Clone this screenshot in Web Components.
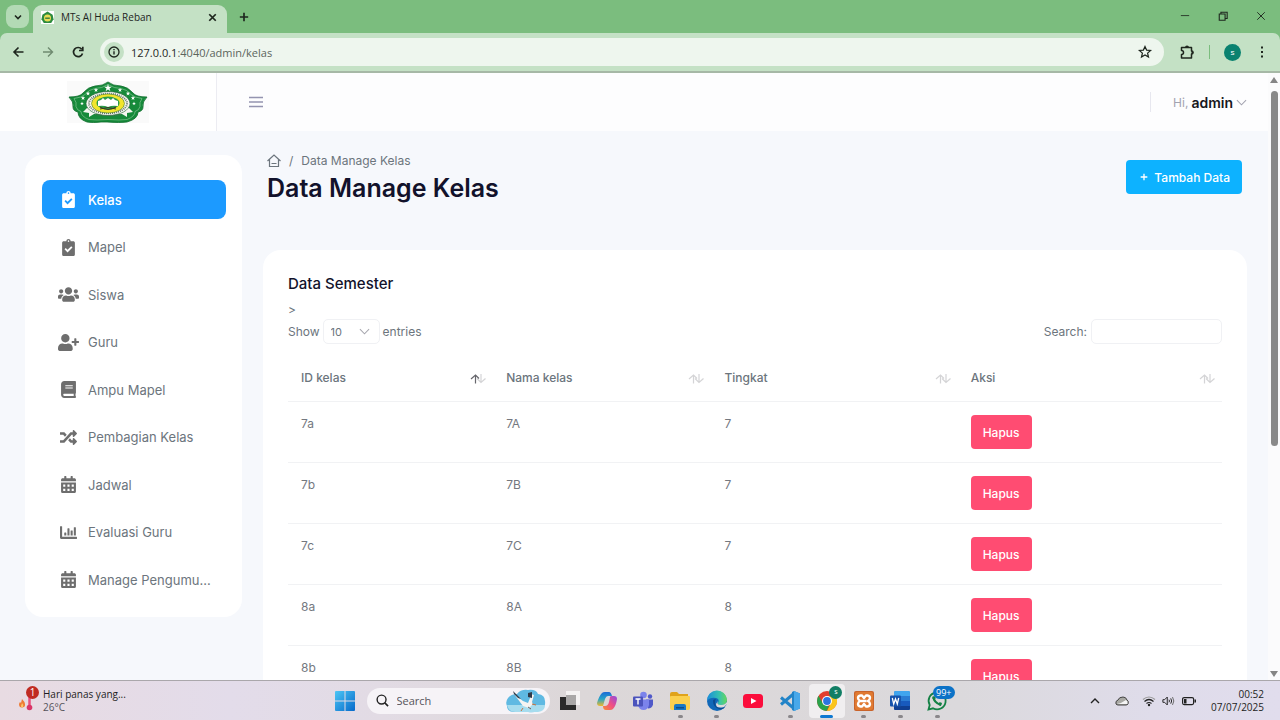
<!DOCTYPE html>
<html lang="id">
<head>
<meta charset="utf-8">
<title>MTs Al Huda Reban</title>
<style>
  html, body { margin: 0; height: 100%; }
  body { font-family: Inter, sans-serif; font-size: 12px; overflow: hidden; background: #f6f8fc; }
</style>
</head>
<body>
<desktop-screen>
  <browser-chrome slot="chrome" tab-title="MTs Al Huda Reban" host="127.0.0.1" path=":4040/admin/kelas"></browser-chrome>
  <site-header slot="page" user="admin"></site-header>
  <side-nav slot="nav">
    <nav-item icon="clipboard" active>Kelas</nav-item>
    <nav-item icon="clipboard">Mapel</nav-item>
    <nav-item icon="users">Siswa</nav-item>
    <nav-item icon="userplus">Guru</nav-item>
    <nav-item icon="book">Ampu Mapel</nav-item>
    <nav-item icon="random">Pembagian Kelas</nav-item>
    <nav-item icon="calendar">Jadwal</nav-item>
    <nav-item icon="chart">Evaluasi Guru</nav-item>
    <nav-item icon="calendar">Manage Pengumu...</nav-item>
  </side-nav>
  <page-heading slot="main">Data Manage Kelas</page-heading>
  <class-card slot="main">Data Semester</class-card>
  <task-bar slot="taskbar"></task-bar>
</desktop-screen>

<script>
const star = (x, y, r) => {
  let p = '';
  for (let i = 0; i < 10; i++) {
    const a = Math.PI * (i / 5 - 0.5), q = i % 2 ? r * 0.4 : r;
    p += (i ? 'L' : 'M') + (x + q * Math.cos(a)).toFixed(1) + ' ' + (y + q * Math.sin(a)).toFixed(1);
  }
  return `<path fill="#fff" d="${p}Z"/>`;
};
const calendarHoles = [256, 384].flatMap(y => [64, 192, 320].map(x => `M${x} ${y}h64v64h-64z`)).join('');

const ICONS = {
  clipboard: ['0 0 384 512', '<path fill="currentColor" fill-rule="evenodd" d="M384 112v352c0 26.5-21.5 48-48 48H48c-26.5 0-48-21.5-48-48V112c0-26.5 21.5-48 48-48h80c0-35.3 28.7-64 64-64s64 28.7 64 64h80c26.5 0 48 21.5 48 48zM192 40c-13.3 0-24 10.7-24 24s10.7 24 24 24 24-10.7 24-24-10.7-24-24-24zM72 312l38-38 53 53 111-111 38 38-149 149z"/>'],
  users: ['0 0 640 512', '<path fill="currentColor" d="M96 224c35.3 0 64-28.7 64-64s-28.7-64-64-64-64 28.7-64 64 28.7 64 64 64zm448 0c35.3 0 64-28.7 64-64s-28.7-64-64-64-64 28.7-64 64 28.7 64 64 64zm32 32h-64c-17.6 0-33.5 7.1-45.1 18.6 40.3 22.1 68.9 62 75.1 109.4h66c17.7 0 32-14.3 32-32v-32c0-35.3-28.7-64-64-64zm-256 0c61.9 0 112-50.1 112-112S381.9 32 320 32 208 82.1 208 144s50.1 112 112 112zm76.8 32h-8.3c-20.8 10-43.9 16-68.5 16s-47.6-6-68.5-16h-8.3C179.6 288 128 339.6 128 403.2V432c0 26.5 21.5 48 48 48h288c26.5 0 48-21.5 48-48v-28.8c0-63.6-51.6-115.2-115.2-115.2zm-223.7-13.4C161.5 263.1 145.6 256 128 256H64c-35.3 0-64 28.7-64 64v32c0 17.7 14.3 32 32 32h65.9c6.3-47.4 34.9-87.3 75.2-109.4z"/>'],
  userplus: ['0 0 640 512', '<path fill="currentColor" d="M624 208h-64v-64c0-8.8-7.2-16-16-16h-32c-8.8 0-16 7.2-16 16v64h-64c-8.8 0-16 7.2-16 16v32c0 8.8 7.2 16 16 16h64v64c0 8.8 7.2 16 16 16h32c8.8 0 16-7.2 16-16v-64h64c8.8 0 16-7.2 16-16v-32c0-8.8-7.2-16-16-16zm-400 48c70.7 0 128-57.3 128-128S294.7 0 224 0 96 57.3 96 128s57.3 128 128 128zm89.6 32h-16.7c-22.2 10.2-46.9 16-72.9 16s-50.6-5.8-72.9-16h-16.7C60.2 288 0 348.2 0 422.4V464c0 26.5 21.5 48 48 48h352c26.5 0 48-21.5 48-48v-41.6c0-74.2-60.2-134.4-134.4-134.4z"/>'],
  book: ['0 0 448 512', '<path fill="currentColor" fill-rule="evenodd" d="M448 360V24c0-13.3-10.7-24-24-24H96C43 0 0 43 0 96v320c0 53 43 96 96 96h328c13.3 0 24-10.7 24-24v-16c0-7.5-3.5-14.3-8.9-18.7-4.2-15.4-4.2-59.3 0-74.7 5.4-4.3 8.9-11.1 8.9-18.6zM128 128h224v32H128zm0 64h224v32H128zm253.4 256H96c-17.7 0-32-14.3-32-32 0-17.6 14.4-32 32-32h285.4c-1.9 17.1-1.9 46.9 0 64z"/>'],
  random: ['0 0 512 512', '<path fill="currentColor" d="M505 359c9.4 9.4 9.4 24.6 0 34l-80 80c-15 15-41 4.5-41-17v-40h-58.8a12 12 0 0 1-8.8-3.8l-70.5-75.6 53.3-57.1L352 336h32v-40c0-21.4 26-32 41-17zM12 176h84l52.8 56.5 53.3-57.1-70.5-75.6A12 12 0 0 0 122.8 96H12c-6.6 0-12 5.4-12 12v56c0 6.6 5.4 12 12 12zm372 0v40c0 21.5 26 32 41 17l80-80c9.4-9.4 9.4-24.6 0-34l-80-80C410 24 384 34.6 384 56v40h-58.8a12 12 0 0 0-8.8 3.8L96 336H12c-6.6 0-12 5.4-12 12v56c0 6.6 5.4 12 12 12h110.8c3.3 0 6.5-1.4 8.8-3.8L352 176z"/>'],
  calendar: ['0 0 448 512', `<path fill="currentColor" fill-rule="evenodd" d="M0 464c0 26.5 21.5 48 48 48h352c26.5 0 48-21.5 48-48V192H0z${calendarHoles}M400 64h-48V16c0-8.8-7.2-16-16-16h-32c-8.8 0-16 7.2-16 16v48H160V16c0-8.8-7.2-16-16-16h-32c-8.8 0-16 7.2-16 16v48H48C21.5 64 0 85.5 0 112v48h448v-48c0-26.5-21.5-48-48-48z"/>`],
  chart: ['0 0 512 512', '<path fill="currentColor" d="M0 76q0-12 12-12h40q12 0 12 12v308h436q12 0 12 12v40q0 12-12 12H32q-32 0-32-32zM128 268q0-12 12-12h38q12 0 12 12v76H128zM224 140q0-12 12-12h38q12 0 12 12v204h-62zM320 204q0-12 12-12h38q12 0 12 12v140h-62zM416 108q0-12 12-12h38q12 0 12 12v236h-62z"/>'],
  down: ['0 0 12 12', '<path fill="none" stroke="currentColor" stroke-width="1.1" d="M1 3.5l5 5 5-5"/>'],
  tabdown: ['0 0 12 12', '<path fill="none" stroke="currentColor" stroke-width="1.6" d="M3 4.5L6 7.5l3-3"/>'],
  plus: ['0 0 12 12', '<path fill="none" stroke="currentColor" stroke-width="2" d="M6 1v10M1 6h10"/>'],
  close: ['0 0 12 12', '<path fill="none" stroke="currentColor" stroke-width="1.6" d="M3 3l6 6M9 3l-6 6"/>'],
  closethin: ['0 0 12 12', '<path fill="none" stroke="currentColor" stroke-width="1.1" d="M1.5 1.5l9 9M10.5 1.5l-9 9"/>'],
  min: ['0 0 12 12', '<path fill="none" stroke="currentColor" d="M1 5.5h10"/>'],
  restore: ['0 0 12 12', '<path fill="none" stroke="currentColor" stroke-width="1.3" d="M1.500 3.500h7V11h-7zM3.500 3.500V1.500H11V9H8.500"/>'],
  back: ['0 0 16 16', '<path fill="none" stroke="currentColor" stroke-width="1.6" d="M13.500 8H4M8.500 3.500L4 8l4.500 4.500"/>'],
  forward: ['0 0 16 16', '<path fill="none" stroke="currentColor" stroke-width="1.4" d="M3 8h9.500M8 3.500L12.500 8 8 12.500"/>'],
  reload: ['0 0 16 16', '<path fill="none" stroke="currentColor" stroke-width="1.7" d="M12.500 9.500A4.600 4.600 0 1 1 11.700 5.200M12.800 2.800v3.700H9"/>'],
  info: ['0 0 16 16', '<circle cx="8" cy="8" r="5" fill="none" stroke="currentColor" stroke-width="1.3"/><path stroke="currentColor" stroke-width="1.4" d="M8 7.300V10.600M8 5v1.300"/>'],
  star: ['0 0 16 16', '<path fill="none" stroke="currentColor" stroke-width="1.2" d="M8 2.500l1.600 3.600 4 .4-3 2.600.9 4L8 11l-3.500 2.100.9-4-3-2.600 4-.4z"/>'],
  puzzle: ['0 0 16 16', '<path fill="none" stroke="currentColor" stroke-width="1.5" stroke-linejoin="round" d="M2.500 3.500h10v3.500a1.500 1.500 0 0 1 0 3v4h-10v-3.500a2 2 0 0 0 0-4z"/><path d="M6 3.500a2 2 0 0 1 4 0zM12.500 6.500a2 2 0 0 1 0 4z" fill="currentColor"/>'],
  dots: ['0 0 16 16', '<path fill="currentColor" d="M7 2.500h2v2H7zM7 7h2v2H7zM7 11.500h2v2H7z"/>'],
  menu: ['0 0 14 12', '<path stroke="currentColor" stroke-width="1.3" d="M0 1.500h14M0 6h14M0 10.500h14"/>'],
  home: ['0 0 14 14', '<path fill="none" stroke="currentColor" stroke-width="1.2" d="M.500 7L7 1l6.500 6M2.500 5.500v7h9v-7M4.500 9.500h5"/>'],
  sort: ['0 0 16 10', '<path fill="none" stroke="currentColor" stroke-width="1.2" style="opacity:var(--up,.28)" d="M5.500 9.500V1M1 5l4.500-4L9 4.500"/><path fill="none" stroke="currentColor" stroke-width="1.2" opacity=".28" d="M11 0v8.500M7 4.500l4 4 4.500-4"/>'],
  triup: ['0 0 8 6', '<path fill="currentColor" d="M4 0l4 6H0z"/>'],
  tridown: ['0 0 8 6', '<path fill="currentColor" d="M0 0h8L4 6z"/>'],
  logo: ['0 0 82 42', `<path fill="#fafafa" d="M0 0h82v42H0z"/><path fill="#168a3a" stroke="#0c6b2a" stroke-width=".8" d="M41 1q5 4 13 4 7 1 12 7 3 4 14 4-5 5-4 10 0 4-5 5 0 7-11 10-7 1-20 0h-6q-8 1-14 0-9-3-9-10-5-1-5-5 1-5-4-10 11 0 14-4 5-6 12-7 8 0 13-4z"/>
    <path fill="none" stroke="#a8d6b1" stroke-width=".5" d="M41 3.5q6 4 13 4 6 1 10 6 3 3 11 4-3 4-2 8-1 4-5 5 0 5-8 8-7 1-19 0-12 1-19 0-8-3-8-8-4-1-5-5 1-4-2-8 8-1 11-4 4-5 10-6 7 0 13-4z"/>
    <path fill="#f4f6f0" d="M16 31l4-4h42l4 4-6 1v4l-5-3H27l-5 3v-4z"/>
    <ellipse cx="41" cy="22.5" rx="22" ry="12" fill="#f4f6f0" stroke="#1a5c2e" stroke-width=".6"/>
    <ellipse cx="41" cy="22.5" rx="19" ry="9.8" fill="none" stroke="#65786a" stroke-width="2" stroke-dasharray="1 1"/>
    <ellipse cx="41" cy="22.5" rx="16.5" ry="9.5" fill="#f2e52c" stroke="#2a6c2a" stroke-width=".5"/>
    <ellipse cx="41" cy="22" rx="11.5" ry="6.5" fill="#2c9c49"/>
    <path fill="#fff" d="M31 20l3-1 2-2 2 2 3-2 3 2 2-2 2 2 3 1v5q-6-1-10 1-4-2-10-1z"/>
    <path fill="none" stroke="#3b3b22" d="M33 28q8-3 16 0M33 26q8 5 16 0"/>
    <path fill="none" stroke="#55705a" stroke-dasharray="1 .8" d="M28 33.5q13 2 26 0"/>
    ${star(41, 7, 4)}${star(29, 9, 2.3)}${star(53, 9, 2.3)}${star(21, 12.5, 2.3)}${star(61, 12.5, 2.3)}${star(16, 17, 2.3)}${star(66, 17, 2.3)}${star(15, 22.5, 2)}${star(67, 22.5, 2)}`],
  favicon: ['0 0 14 14', '<path fill="#fff" d="M0 0h14v14H0z"/><path fill="#2c8b3e" d="M7 .5l5.500 3.500 1 5-2.500 4H3L.5 9l1-5z"/><circle cx="7" cy="7.5" r="3.8" fill="#e6dc54"/><path fill="#347c3a" d="M4.500 7h5v1.500h-5z"/>'],
  weather: ['0 0 26 26', '<path fill="#ee7b34" d="M5 11q3 3 3 5a3 3 0 0 1-6 1q0-2 1-3l1 1z"/><path fill="#fbc56b" d="M5 15q2 2 1 4-2 1-2-1z"/><path stroke="#e8517c" stroke-width="2.500" stroke-linecap="round" d="M12.500 7v12"/><circle cx="12.500" cy="19.500" r="2.800" fill="#d93668"/>'],
  windows: ['0 0 20 20', '<defs><linearGradient id="w" x1="0" y1="0" x2="1" y2="1"><stop stop-color="#4cc6f5"/><stop offset="1" stop-color="#0669ca"/></linearGradient></defs><path fill="url(#w)" d="M1 0h8.500v9.500H0V1q0-1 1-1zM10.500 0H19q1 0 1 1v8.500h-9.500zM0 10.500h9.500V20H1q-1 0-1-1zM10.500 10.500H20V19q0 1-1 1h-8.500z"/>'],
  search: ['0 0 14 14', '<circle cx="6" cy="6" r="4.8" fill="none" stroke="#222" stroke-width="1.5"/><path stroke="#222" stroke-width="1.7" d="M9.500 9.500L13 13"/>'],
  bird: ['0 0 40 24', '<path fill="#5fb9e2" d="M2 9q3-4 9-4 4-5 11-4 8-1 10 4 7 1 7 7 1 7-5 8-2 4-12 3H9q-8 0-8-6-2-4 1-8z"/><path fill="#a6dcee" d="M1 16h38q0 6-7 7H9q-7-1-8-7z"/><path fill="#f6f4f2" d="M8 5l9 7 5 2 2-5 1-4 3 1-2 7 1 2-4 4-6-2z"/><path fill="#303a48" d="M7 2l8 8-3-1-4-4zM22 4l4-1 0 6-4-1z"/><path fill="none" stroke="#c9713c" d="M26 15l4 1M17 19l-2 3"/><path fill="none" stroke="#6e5c58" d="M22 18l3 2"/>'],
  taskview: ['0 0 20 20', '<path fill="#f4f2f2" d="M6 0h14v14H6z"/><path fill="#2a2a2a" d="M0 6h6v8h10v5H0z"/><path fill="#a9a7a7" d="M6 4h10v10H6z"/>'],
  copilot: ['0 0 20 20', '<defs><linearGradient id="a" x2="0" y2="1"><stop stop-color="#1c6ad6"/><stop offset=".5" stop-color="#27a6c8"/><stop offset="1" stop-color="#f0b92b"/></linearGradient><linearGradient id="b" x1="1" x2="0" y2="1"><stop stop-color="#8e4be0"/><stop offset=".5" stop-color="#ef4f86"/><stop offset="1" stop-color="#f98d32"/></linearGradient></defs><path fill="url(#a)" d="M5 2q1-1 3-1h4q2 0 3 4H11q-2 0-3 3l-2 7H3q-3 0-3-3 2-7 5-10z"/><path fill="url(#b)" d="M15 5h2q3 0 3 3-1 7-4 10-1 1-3 1H9q-3 0-3-4h2q3 0 4-4l1-5q0-1 2-1z"/>'],
  teams: ['0 0 20 20', '<circle cx="10.5" cy="4" r="3.3" fill="#7b83eb"/><circle cx="17" cy="5.5" r="2.2" fill="#5059c9"/><path fill="#5059c9" d="M13 8.500h7v5q-1 4-5 4z"/><path fill="#7b83eb" d="M5 8.500h11V14q-1 5-5.500 5T5 14z"/><rect y="5.5" width="10" height="10" rx="1" fill="#4b53bc"/><path stroke="#fff" stroke-width="1.4" d="M2.500 8h5M5 8v5.500"/>'],
  folder: ['0 0 20 20', '<path fill="#e0a31b" d="M0 3q0-2 2-2h5l2 2h9v5H0z"/><path fill="#fbd04e" d="M0 6q0-1 1-1h18q1 0 1 1v11q0 2-2 2H2q-2 0-2-2z"/><path fill="#1979c4" d="M4 15q0-2 2-2h8q2 0 2 2v4H4z"/><path fill="#0d4e8a" d="M6 16h8v1.500H6z"/>'],
  edge: ['0 0 20 20', '<defs><linearGradient id="e" x2="1"><stop stop-color="#1b8ddb"/><stop offset=".6" stop-color="#35c1b0"/><stop offset="1" stop-color="#66d85c"/></linearGradient></defs><circle cx="10" cy="10" r="10" fill="#1268b8"/><path fill="url(#e)" d="M0 10A10 10 0 0 1 20 9q0 5-6 5-4 0-3-2 2-4-2-5-6-1-9 3z"/><path fill="#0d4b91" d="M6 10q0 6 6 8 4 1 6-2-9 3-10-4 0-3 1-4-3 0-3 2z"/><path fill="#dedada" d="M11 10q-2 4 3 4 4 0 6-3l0 2-3 3q-8 2-8-3z"/>'],
  youtube: ['0 0 20 20', '<rect y="3" width="20" height="14" rx="3.5" fill="#fb0d3c"/><path fill="#fff" d="M8 7l5.500 3L8 13z"/>'],
  vscode: ['0 0 20 20', '<path fill="#2284c8" d="M14 0l6 2.500v15L14 20l-2-1V1z"/><path fill="none" stroke="#2284c8" stroke-width="3" d="M1 6.500L14 17.500M1 13.500L14 2.500"/><path fill="#47a8ea" d="M14 0l6 2.500v15L14 20z"/>'],
  chrome: ['0 0 20 20', '<circle cx="10" cy="10" r="10" fill="#e33e2f"/><path fill="#fac51c" d="M10 5.500h9A10 10 0 0 1 10 20l4-8z"/><path fill="#2ba24c" d="M1.500 4.800L6 12.500l4 2.500 2 0-2.500 5A10 10 0 0 1 1.500 4.800z"/><circle cx="10" cy="10" r="5" fill="#fff"/><circle cx="10" cy="10" r="3.9" fill="#2d75e0"/>'],
  xampp: ['0 0 20 20', '<rect width="20" height="20" rx="2" fill="#c9632a"/><rect x="1" y="1" width="18" height="18" rx="2" fill="#e07a32"/><path fill="none" stroke="#fff" stroke-width="2.4" stroke-linejoin="round" d="M7.500 10H6.200Q4 9 4 7t2.500-2.500H8L10 7l2-2.500h1.500Q16 5 16 7t-2.200 3Q16 11 16 13t-2.500 2.500H12L10 13l-2 2.500H6.500Q4 15 4 13t2.200-3M7.500 10h5"/>'],
  word: ['0 0 20 20', '<rect x="4" width="16" height="19" rx="1.5" fill="#2b7cd3"/><path fill="#41a5ee" d="M4 5V1.500Q4 0 5.500 0h13Q20 0 20 1.500V5z"/><path fill="#185abd" d="M4 10h16v5H4z"/><path fill="#103f91" d="M4 15h16v2.500q0 1.500-1.500 1.500h-13Q4 19 4 17.500z"/><rect y="4.5" width="11" height="11" rx="1" fill="#1753ac"/><path fill="none" stroke="#fff" stroke-width="1.3" d="M2.300 7l1.400 6L5.500 8l1.800 5 1.400-6"/>'],
  whatsapp: ['0 0 20 20', '<path fill="none" stroke="#148145" stroke-width="1.8" d="M1.500 18.500l1.200-4.500A8.500 8.500 0 1 1 6 17.300z"/><path fill="none" stroke="#148145" stroke-width="2.2" d="M6.500 5.500q0 6 7.500 8.500"/><path stroke="#148145" stroke-width="3" d="M6 6l2 2M12 12.500l2.500 1"/>'],
  trayup: ['0 0 12 12', '<path fill="none" stroke="#222" stroke-width="1.4" d="M2 8l4-4 4 4"/>'],
  cloud: ['0 0 14 12', '<path fill="#a9a9a4" stroke="#444" d="M1 9q-1-3 2-4 1-3 5-3 3 0 4 3 2 1 1 4-1 1-2 1H3q-1 0-2-1z"/><path fill="#f5f5f5" d="M2 9q5-1 9-4 2 1 1.500 4H3z"/>'],
  wifi: ['0 0 14 12', '<g fill="none" stroke="#222" stroke-width="1.2"><path stroke="#999" d="M1 4.500q6-5 12 0"/><path d="M2.500 6.500q4.500-4 9 0M4.500 8.500q2.500-2 5 0"/></g><circle cx="7" cy="10" r="1.2" fill="#222"/>'],
  volume: ['0 0 16 12', '<g fill="none" stroke="#222" stroke-width="1.1"><path d="M1 4.500h2l3-3v9l-3-3H1zM8 4.500q1 1.500 0 3M10 3q2 3 0 6"/><path stroke="#666" d="M12 1.500q3 4.500 0 9"/></g>'],
  battery: ['0 0 14 10', '<rect x=".6" y="1.6" width="11" height="7" rx="1.5" fill="none" stroke="#222" stroke-width="1.2"/><path fill="#222" d="M2 3h2.500v4.500H2zM12.500 3.500H14v3h-1.500z"/>']
};

const define = (name, markup, setup) => customElements.define(name, class extends HTMLElement {
  constructor() {
    super();
    this.attachShadow({ mode: 'open' });
  }
  connectedCallback() {
    const template = document.createElement('template');
    template.innerHTML = typeof markup === 'function' ? markup(this) : markup;
    this.shadowRoot.replaceChildren(template.content.cloneNode(true));
    if (setup) setup(this);
  }
});

define('ui-icon', el => {
  const [box, body] = ICONS[el.getAttribute('name')];
  return `<style>:host{display:inline-block;flex:none;width:16px;height:16px}svg{display:block;width:100%;height:100%;overflow:visible}</style>
  <svg viewBox="${box}" aria-hidden="true">${body}</svg>`;
});

define('desktop-screen', `<style>
  :host{display:flex;flex-direction:column;height:100vh;overflow:hidden}
  .view{flex:1;min-height:0;display:flex;background:#f6f8fc}
  .doc{flex:1;min-width:0;overflow:hidden}
  .body{display:grid;grid-template-columns:217px minmax(0,1fr);gap:21px;padding:24px 21px 24px 25px;align-items:start}
  main{display:flex;flex-direction:column}
</style>
<slot name="chrome"></slot>
<div class="view">
  <div class="doc"><slot name="page"></slot>
    <div class="body"><slot name="nav"></slot><main><slot name="main"></slot></main></div>
  </div>
  <page-scrollbar></page-scrollbar>
</div>
<slot name="taskbar"></slot>`);

define('page-scrollbar', `<style>
  :host{display:flex;flex-direction:column;align-items:center;width:12px;background:#fbfbfc;padding:4px 0 3px;box-sizing:border-box;color:#858585}
  ui-icon{width:8px;height:6px}
  .track{flex:1;width:7px;margin:8px 0}
  .thumb{height:62%;min-height:20px;border-radius:4px;background:#898989}
</style><ui-icon name="triup"></ui-icon><div class="track"><div class="thumb"></div></div><ui-icon name="tridown"></ui-icon>`);

define('browser-chrome', el => `<style>
  :host{display:block;font-family:"Open Sans",sans-serif;background:#7bbd7e;color:#1e261e}
  button{border:0;background:none;padding:0;color:inherit;display:grid;place-items:center}
  .tabs{display:flex;height:33px;align-items:flex-end;padding-left:6px}
  .list{width:23px;height:23px;border-radius:8px;background:#b3dab5;margin-bottom:5px}
  .list ui-icon,.close ui-icon{width:12px;height:12px}
  .tab{display:flex;align-items:center;box-sizing:border-box;width:194px;height:28px;margin-left:4px;padding:0 8px 4px;border-radius:9px 9px 0 0;background:#c4e1c5;font-size:10px;gap:7px}
  .tab ui-icon{width:13px;height:13px}
  .tab span{flex:1;white-space:nowrap}
  .new{width:22px;height:22px;margin:0 0 5px 6px}
  .new ui-icon{width:10px;height:10px}
  .win{margin-left:auto;display:flex;margin-bottom:7px}
  .win button{width:38px;height:20px}
  .win ui-icon{width:10px;height:10px}
  .bar{display:flex;align-items:center;height:38px;background:#c4e1c5;border-radius:7px 7px 0 0;border-bottom:2px solid #a6b8a6;padding:0 10px}
  .nav{display:flex;gap:14px}
  .fwd{color:#6f8a70}
  .url{flex:1;display:flex;align-items:center;height:28px;border-radius:14px;background:#eef6ee;margin:0 15px 0 14px;padding:0 11px 0 4px;min-width:0}
  .info{width:20px;height:20px;border-radius:50%;background:#c4e1c5;display:grid;place-items:center;margin-right:7px}
  .addr{flex:1;font-size:11px;color:#5c655d;white-space:nowrap}
  .addr b{font-weight:400;color:#1e261e}
  .sep{width:1px;height:14px;background:#7bbd7e;margin:0 14px}
  .me{width:17px;height:17px;border-radius:50%;background:#0a8270;color:#fff;font-size:8px;margin-right:13px}
</style>
<div class="tabs">
  <button class="list" aria-label="Cari tab"><ui-icon name="tabdown"></ui-icon></button>
  <div class="tab"><ui-icon name="favicon"></ui-icon><span>${el.getAttribute('tab-title')}</span><button class="close" aria-label="Tutup tab"><ui-icon name="close"></ui-icon></button></div>
  <button class="new" aria-label="Tab baru"><ui-icon name="plus"></ui-icon></button>
  <div class="win"><button aria-label="Minimalkan"><ui-icon name="min"></ui-icon></button><button aria-label="Pulihkan"><ui-icon name="restore"></ui-icon></button><button aria-label="Tutup"><ui-icon name="closethin"></ui-icon></button></div>
</div>
<div class="bar">
  <div class="nav"><button aria-label="Kembali"><ui-icon name="back"></ui-icon></button><button class="fwd" aria-label="Maju"><ui-icon name="forward"></ui-icon></button><button aria-label="Muat ulang"><ui-icon name="reload"></ui-icon></button></div>
  <div class="url"><span class="info"><ui-icon name="info"></ui-icon></span><span class="addr"><b>${el.getAttribute('host')}</b>${el.getAttribute('path')}</span><button aria-label="Tandai"><ui-icon name="star"></ui-icon></button></div>
  <button aria-label="Ekstensi"><ui-icon name="puzzle"></ui-icon></button><span class="sep"></span><button class="me">s</button><button aria-label="Menu"><ui-icon name="dots"></ui-icon></button>
</div>`);

define('site-header', el => `<style>
  :host{display:flex;align-items:center;height:58px;background:#fdfdfe}
  .brand{display:grid;place-items:center;box-sizing:border-box;width:217px;height:58px;border-right:1px solid #ececf2;background:#fff}
  .brand ui-icon{width:82px;height:42px}
  button{border:0;background:none;padding:0;color:#9494b0;display:flex;font:inherit}
  .menu{margin-left:32px}
  .menu ui-icon{width:14px;height:12px}
  .user{margin-left:auto;margin-right:21px;padding-left:22px;border-left:1px solid #e7e7ef;height:20px;align-items:center;gap:3px;font-size:12px;color:#a3a3b0}
  .user b{color:#17171c;font-weight:600;font-size:14px}
  .user ui-icon{width:11px;height:11px}
</style>
<div class="brand"><ui-icon name="logo"></ui-icon></div>
<button class="menu" aria-label="Buka menu"><ui-icon name="menu"></ui-icon></button>
<button class="user">Hi, <b>${el.getAttribute('user')}</b><ui-icon name="down"></ui-icon></button>`);

define('side-nav', `<style>
  :host{display:block;background:#fff;border-radius:18px;padding:25px 16px 18px 17px}
  nav{display:flex;flex-direction:column;justify-content:space-between;min-height:419px}
</style><nav><slot></slot></nav>`);

define('nav-item', el => `<style>
  :host{display:block;color:#6c757d}
  a{display:flex;align-items:center;height:39px;border-radius:8px;color:inherit;text-decoration:none;font-size:13px;white-space:nowrap}
  .i{display:grid;place-items:center;width:22px;height:18px;margin:0 9px 0 15px;color:#6e6e6e}
  ui-icon{width:21px;height:17px}
  :host([active]) a{background:#1c9aff;color:#fff;font-weight:500}
  :host([active]) .i{color:#fff}
</style><a href="#"><span class="i"><ui-icon name="${el.getAttribute('icon')}"></ui-icon></span><slot></slot></a>`);

define('page-heading', `<style>
  :host{display:flex;justify-content:space-between;align-items:flex-start;padding:0 5px 0 4px;min-height:95px}
  nav{display:flex;align-items:center;height:11px;gap:8px;color:#6c757d;font-size:12px}
  nav a{color:inherit;display:flex}
  ui-icon{width:14px;height:14px}
  h1{margin:7px 0 0;font-size:25px;line-height:30px;font-weight:600;color:#12122b}
  button{display:flex;align-items:center;gap:6px;height:34px;margin-top:5px;padding:0 12px 0 14px;border:0;border-radius:4px;background:#0db2ff;color:#fff;font:500 12px Inter,sans-serif}
  button ui-icon{width:8px;height:8px}
</style>
<div><nav aria-label="Breadcrumb"><a href="#" aria-label="Beranda"><ui-icon name="home"></ui-icon></a><span>/</span><span>Data Manage Kelas</span></nav><h1><slot></slot></h1></div>
<button><ui-icon name="plus"></ui-icon>Tambah Data</button>`);

define('class-card', () => {
  const rows = ['7a', '7b', '7c', '8a', '8b'];
  const head = ['ID kelas', 'Nama kelas', 'Tingkat', 'Aksi'];
  return `<style>
  :host{display:block;background:#fff;border-radius:18px;padding:24px 25px;color:#6c757d}
  h2{margin:0;font-size:15px;line-height:20px;font-weight:500;color:#12122b}
  p{margin:8px 0 0;line-height:16px;font-size:12px}
  .tools{display:flex;justify-content:space-between;margin-top:1px}
  label{display:flex;align-items:center;gap:3px;height:25px}
  label:last-child{gap:4px}
  .pick{display:grid;align-items:center;width:57px}
  .pick>*{grid-area:1/1}
  .pick ui-icon{justify-self:end;width:11px;height:11px;margin-right:10px;color:#a6a6ae;pointer-events:none}
  select,input{box-sizing:border-box;height:25px;border:1px solid #f0f1f4;border-radius:5px;background:#fff;color:inherit;font:11px Inter,sans-serif}
  select{appearance:none;width:100%;padding:0 7px}
  input{width:131px}
  table{width:100%;table-layout:fixed;border-collapse:separate;border-spacing:0;margin-top:11px}
  th,td{box-sizing:border-box;padding:13px;border-bottom:1px solid #f1f2f4;text-align:left;vertical-align:top;line-height:18px;color:#74787f;font-weight:400}
  th{font-weight:500;padding:14px 7px 14px 13px;color:#6c757d}
  th div{display:flex;justify-content:space-between;align-items:center}
  th ui-icon{width:16px;height:10px;margin-top:2px;color:#66666c}
  th:first-child ui-icon{--up:1}
  td button{display:block;height:34px;padding:0 12px;border:0;border-radius:4px;background:#ff4c72;color:#fff;font:500 12px Inter,sans-serif}
  .c1{width:205px}.c2{width:218px}.c3{width:246px}.c4{width:264px}
</style>
<h2><slot></slot></h2><p>&gt;</p>
<div class="tools">
  <label>Show <span class="pick"><select><option>10</option><option>25</option></select><ui-icon name="down"></ui-icon></span> entries</label>
  <label>Search: <input type="search"></label>
</div>
<table><colgroup><col class="c1"><col class="c2"><col class="c3"><col class="c4"></colgroup>
<thead><tr>${head.map(h => `<th><div>${h}<ui-icon name="sort"></ui-icon></div></th>`).join('')}</tr></thead>
<tbody>${rows.map(r => `<tr><td>${r}</td><td>${r.toUpperCase()}</td><td>${r[0]}</td><td><button>Hapus</button></td></tr>`).join('')}</tbody></table>`;
});

define('task-bar', () => {
  const apps = ['taskview', 'copilot', 'teams', 'folder', 'edge', 'youtube', 'vscode', 'chrome', 'xampp', 'word', 'whatsapp'];
  const running = ['folder', 'edge', 'vscode', 'xampp', 'word', 'whatsapp'];
  const badges = { chrome: '<i class="me">s</i>', whatsapp: '<i class="count">99+</i>' };
  return `<style>
  :host{display:grid;grid-template-columns:1fr auto 1fr;align-items:center;height:39px;border-top:1px solid #aaa7ab;background:linear-gradient(90deg,#e8dbe2,#e3dcea 18%,#e2dbe4 30%,#dcd7d8 45%,#dbd9dc 75%,#dfdcea 90%,#e1dded);font-family:"Open Sans",sans-serif;font-size:10px;color:#1d1d22}
  button{border:0;background:none;padding:0;font:inherit;color:inherit}
  .weather{display:flex;justify-self:start;margin-left:17px;text-align:left;position:relative;line-height:13px}
  .weather ui-icon{width:26px;height:26px}
  .weather small{display:block;font-size:10px;color:#55535a}
  .one{position:absolute;left:9px;top:-2px;width:13px;height:13px;border-radius:50%;background:#c02b22;color:#fff;font-style:normal;text-align:center}
  .mid{display:flex;align-items:center;padding-left:2px}
  .start{width:37px;display:grid;place-items:center}
  .start ui-icon,.app ui-icon{width:20px;height:20px}
  .search{display:flex;align-items:center;box-sizing:border-box;width:183px;height:26px;border-radius:13px;background:#f6f3f7;margin:0 2px 0 3px;padding:0 4px 0 9px;gap:8px}
  .search ui-icon{width:13px;height:13px}
  .search input{flex:1;min-width:0;border:0;padding:0;background:none;font:11px "Open Sans",sans-serif}
  .search input::placeholder{color:#55535a;opacity:1}
  .search .bird{width:40px;height:24px}
  .apps{display:grid;grid-template-columns:repeat(11,1fr);width:404px}
  .app{position:relative;display:grid;place-items:center;height:34px;border-radius:4px}
  .app.on{background:#f0eef0}
  .app.run::after,.app.on::after{content:"";position:absolute;bottom:0;width:5px;height:3px;border-radius:2px;background:#8a878b}
  .app.on::after{width:13px;background:#0d78d1}
  .me,.count{position:absolute;font-style:normal;color:#fff;text-align:center}
  .me{right:3px;top:2px;width:13px;height:13px;line-height:12px;font-size:7px;border-radius:50%;background:#117e65}
  .count{left:14px;top:2px;width:22px;height:13px;line-height:13px;font-size:9px;border-radius:7px;background:#0c72c7}
  .tray{display:flex;justify-self:end;align-items:center;margin-right:16px}
  .tray ui-icon{width:14px;height:12px}
  .tray .sys{display:flex;gap:6px;margin:0 15px 0 13px}
  .tray .up{width:12px;margin-right:14px}
  .clock{text-align:right;line-height:13px}
</style>
<button class="weather"><ui-icon name="weather"></ui-icon><i class="one">1</i><span>Hari panas yang...<small>26°C</small></span></button>
<div class="mid"><button class="start" aria-label="Start"><ui-icon name="windows"></ui-icon></button>
  <label class="search"><ui-icon name="search"></ui-icon><input placeholder="Search" aria-label="Search"><ui-icon class="bird" name="bird"></ui-icon></label>
  <div class="apps">${apps.map(a => `<button class="app${running.includes(a) ? ' run' : ''}${a === 'chrome' ? ' on' : ''}" aria-label="${a}"><ui-icon name="${a}"></ui-icon>${badges[a] || ''}</button>`).join('')}</div></div>
<div class="tray"><ui-icon class="up" name="trayup"></ui-icon><ui-icon name="cloud"></ui-icon><span class="sys"><ui-icon name="wifi"></ui-icon><ui-icon name="volume"></ui-icon><ui-icon name="battery"></ui-icon></span><div class="clock">00:52<br>07/07/2025</div></div>`;
});
</script>
</body>
</html>
